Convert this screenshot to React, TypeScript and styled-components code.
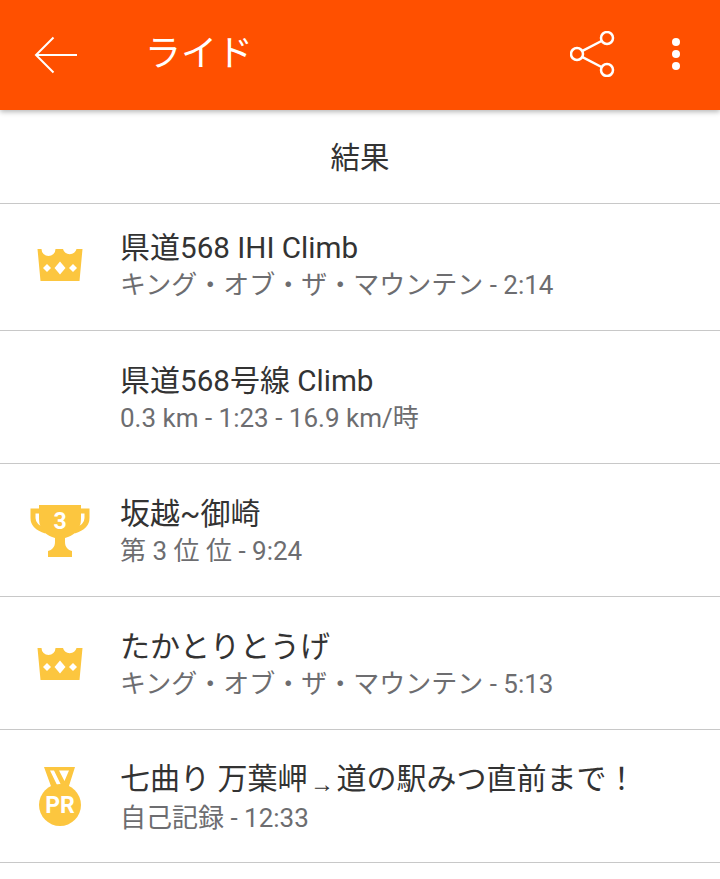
import React from 'react';
import styled, { createGlobalStyle } from 'styled-components';

type Medal = 'crown' | 'trophy' | 'pr' | null;

interface Result {
  id: string;
  title: React.ReactNode;
  detail: string;
  medal: Medal;
}

const GOLD = '#fcc63f';

const Latin = styled.span`
  font-size: 29.6px;
`;

const Arrow = styled.span`
  display: inline-block;
  width: 29px;
  text-align: center;
  font-family: "Liberation Sans", sans-serif;
  font-size: 24px;
  position: relative;
  top: 3px;
`;

const results: Result[] = [
  {
    id: 'ihi',
    title: (
      <>
        県道<Latin>568 IHI Climb</Latin>
      </>
    ),
    detail: 'キング・オブ・ザ・マウンテン - 2:14',
    medal: 'crown',
  },
  {
    id: 'route',
    title: (
      <>
        県道<Latin>568</Latin>号線<Latin> Climb</Latin>
      </>
    ),
    detail: '0.3 km - 1:23 - 16.9 km/時',
    medal: null,
  },
  { id: 'misaki', title: '坂越~御崎', detail: '第 3 位 位 - 9:24', medal: 'trophy' },
  { id: 'takatori', title: 'たかとりとうげ', detail: 'キング・オブ・ザ・マウンテン - 5:13', medal: 'crown' },
  {
    id: 'nanamagari',
    title: (
      <>
        七曲り 万葉岬<Arrow>→</Arrow>道の駅みつ直前まで！
      </>
    ),
    detail: '自己記録 - 12:33',
    medal: 'pr',
  },
];

const CrownIcon = () => (
  <svg width="46" height="32" viewBox="0 0 46 32">
    <path
      fill={GOLD}
      d="M0.500 0H4.500A7 7 0 0 0 18.500 0H26A7 7 0 0 0 39.500 0H45.500L42.500 32H3.500Z"
    />
    <path fill="#fff" d="M23 12.500L28.500 19L23 25.500L17.500 19Z" />
    <path fill="#fff" d="M10 15L14 19L10 23L6 19Z" />
    <path fill="#fff" d="M36 15L40 19L36 23L32 19Z" />
  </svg>
);

const TrophyIcon = () => (
  <svg width="60" height="52" viewBox="0 0 60 52">
    <path
      fill="none"
      stroke={GOLD}
      strokeWidth="5"
      d="M12 6H3V13C3 20 9 24 16 26M48 6H57V13C57 20 51 24 44 26"
    />
    <path
      fill={GOLD}
      d="M9 0H51V14C51 25 43 31 35 33V37C35 42 38 45 42 46V52H18V46C22 45 25 42 25 37V33C17 31 9 25 9 14Z"
    />
    <text x="30" y="24" textAnchor="middle" fontFamily="Roboto, sans-serif" fontWeight="700" fontSize="23" fill="#fff">
      3
    </text>
  </svg>
);

const PrIcon = () => (
  <svg width="42" height="60" viewBox="0 0 42 60">
    <path fill={GOLD} fillRule="evenodd" d="M5 0H36L29 22H13ZM11 3.500L19 20H23L15 3.500ZM20 3.500L25.500 14L30 3.500Z" />
    <circle cx="21" cy="38" r="21" fill={GOLD} />
    <text x="21" y="46" textAnchor="middle" fontFamily="Roboto, sans-serif" fontWeight="700" fontSize="23" fill="#fff">
      PR
    </text>
  </svg>
);

const BackIcon = () => (
  <svg width="44" height="38" viewBox="0 0 44 38">
    <path fill="none" stroke="#fff" strokeWidth="2" d="M43 19H2M19.500 1.500L2 19L19.500 36.500" />
  </svg>
);

const ShareIcon = () => (
  <svg width="46" height="46" viewBox="0 0 46 46">
    <g fill="none" stroke="#fff" strokeWidth="2.500">
      <circle cx="7" cy="23" r="6" />
      <circle cx="37" cy="7" r="6" />
      <circle cx="37" cy="39" r="6" />
      <path d="M12.500 19.800L31.500 10M12.500 26.200L31.500 36" />
    </g>
  </svg>
);

const medalIcons = {
  crown: <CrownIcon />,
  trophy: <TrophyIcon />,
  pr: <PrIcon />,
};

const App = () => {
  return (
    <>
      <GlobalStyle />
      <Page>
        <Toolbar>
          <BackButton>
            <BackIcon />
          </BackButton>
          <Title>ライド</Title>
          <ShareButton>
            <ShareIcon />
          </ShareButton>
          <MoreButton>
            <Dot />
            <Dot />
            <Dot />
          </MoreButton>
        </Toolbar>
        <SectionHeader>結果</SectionHeader>
        {results.map(({ id, title, detail, medal }, index) => (
          <Row key={id} $compact={index === 0}>
            <MedalSlot>{medal && medalIcons[medal]}</MedalSlot>
            <RowText>
              <RowTitle>{title}</RowTitle>
              <RowDetail>{detail}</RowDetail>
            </RowText>
          </Row>
        ))}
      </Page>
    </>
  );
};

const GlobalStyle = createGlobalStyle`
  html, body {
    margin: 0;
    padding: 0;
    background: #fff;
  }
  body {
    font-family: Roboto, "Noto Sans CJK JP", sans-serif;
  }
`;

const Page = styled.div`
  width: 720px;
  height: 879px;
  overflow: hidden;
  background: #fff;
`;

const Toolbar = styled.header`
  position: relative;
  z-index: 1;
  height: 110px;
  display: flex;
  align-items: center;
  background: #ff5000;
  box-shadow: 0 2px 5px rgba(0, 0, 0, 0.28);
`;

const BackButton = styled.div`
  display: flex;
  width: 148px;
  padding-left: 34px;
  padding-bottom: 1px;
  box-sizing: border-box;
`;

const Title = styled.h1`
  flex: 1;
  margin: 0 0 2px -3px;
  color: #fff;
  font-size: 36px;
  font-weight: 400;
  line-height: 48px;
`;

const ShareButton = styled.div`
  display: flex;
  margin-right: 56px;
  margin-bottom: 3px;
`;

const MoreButton = styled.div`
  display: flex;
  flex-direction: column;
  gap: 4px;
  margin-right: 40px;
  margin-bottom: 2px;
`;

const Dot = styled.span`
  width: 8px;
  height: 8px;
  border-radius: 50%;
  background: #fff;
`;

const SectionHeader = styled.div`
  height: 94px;
  display: flex;
  align-items: center;
  justify-content: center;
  box-sizing: border-box;
  padding-bottom: 3px;
  border-bottom: 1px solid #c8c8c8;
  color: #333;
  font-size: 29.5px;
`;

const Row = styled.div<{ $compact: boolean }>`
  height: ${(p) => (p.$compact ? 127 : 133)}px;
  display: flex;
  align-items: center;
  box-sizing: border-box;
  padding-top: ${(p) => (p.$compact ? 0 : 1)}px;
  padding-bottom: ${(p) => (p.$compact ? 4 : 0)}px;
  border-bottom: 1px solid #c8c8c8;
`;

const MedalSlot = styled.div`
  width: 120px;
  flex: none;
  display: flex;
  justify-content: center;
`;

const RowText = styled.div`
  display: flex;
  flex-direction: column;
`;

const RowTitle = styled.div`
  color: #333;
  font-size: 30px;
  line-height: 42px;
  white-space: nowrap;
`;

const RowDetail = styled.div`
  margin-top: -2px;
  color: #6d6d70;
  font-size: 26px;
  line-height: 36px;
`;

export default App;
